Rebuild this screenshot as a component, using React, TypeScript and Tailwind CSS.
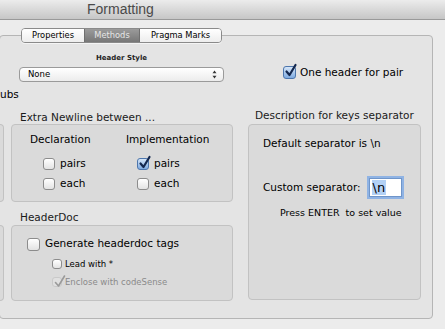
import React from "react";

const FONT = "font-['DejaVu_Sans',Arial,sans-serif]";

function Check({
  checked = false,
  disabled = false,
  size = "w-[12px] h-[12px]",
}: {
  checked?: boolean;
  disabled?: boolean;
  size?: string;
}) {
  let box =
    "border-[#8c8c8c] bg-gradient-to-b from-white to-[#e3e3e3] shadow-[inset_0_1px_0_#fff]";
  if (checked && !disabled)
    box = "border-[#4d76ad] bg-gradient-to-b from-[#d6e6f8] to-[#7eaae0]";
  if (disabled) box = "border-[#c9c9c9] bg-[#e0e0e0]";
  return (
    <span className={`relative inline-block shrink-0 rounded-[3px] border ${box} ${size}`}>
      {checked && (
        <svg
          className="absolute left-[1px] top-[-3px] overflow-visible"
          width="12"
          height="13"
          viewBox="0 0 12 13"
        >
          <path
            d="M1.5 7.5 L4.5 11 L10.5 1"
            fill="none"
            stroke={disabled ? "#9a9a9a" : "#14284f"}
            strokeWidth={disabled ? 1.6 : 2.2}
            strokeLinecap="round"
            strokeLinejoin="round"
          />
        </svg>
      )}
    </span>
  );
}

export default function App() {
  return (
    <div className={`w-[445px] h-[329px] overflow-hidden bg-[#ececec] text-black ${FONT}`}>
      {/* title bar */}
      <div className="h-[20px] border-b border-[#999] bg-gradient-to-b from-[#ececec] to-[#c6c6c6] pl-[87px] font-['Liberation_Sans',Arial,sans-serif] text-[14px] leading-[19px] text-[#4a4a4a]">
        Formatting
      </div>

      <div className="pt-[8px]">
        {/* tabs */}
        <div className="relative z-10 ml-[21px] flex h-[15px] w-[201px] overflow-hidden rounded-[4px] border border-[#8a8a8a] text-[8.3px] leading-[13px] shadow-[0_1px_0_rgba(255,255,255,0.6)]">
          <div className="w-[62px] bg-gradient-to-b from-white to-[#ededed] text-center">Properties</div>
          <div className="w-[56px] border-x border-[#6f6f6f] bg-gradient-to-b from-[#9b9b9b] to-[#777] text-center text-[#e6e6e6]">
            Methods
          </div>
          <div className="flex-1 bg-gradient-to-b from-white to-[#ededed] text-center">Pragma Marks</div>
        </div>

        {/* tab view */}
        <div className="-ml-px -mt-[8px] h-[284px] w-[434px] rounded-[4px] border border-[#b5b5b5] bg-[#e4e4e4]">
          {/* header style row */}
          <div className="flex items-end pt-[17px]">
            <div className="ml-[19px] flex w-[205px] flex-col">
              <div className="h-[10px] text-center text-[7px] font-bold leading-[10px] text-[#262626]">Header Style</div>
              <div className="mt-[4px] flex h-[15px] items-center justify-between rounded-[4px] border border-[#9a9a9a] bg-gradient-to-b from-white to-[#ececec] pl-[8px] pr-[6px] text-[8.5px]">
                <span>None</span>
                <svg width="5" height="9" viewBox="0 0 5 9">
                  <path d="M2.5 0.5 L4.5 3.2 L0.5 3.2 Z" fill="#333" />
                  <path d="M2.5 8.5 L4.5 5.8 L0.5 5.8 Z" fill="#333" />
                </svg>
              </div>
            </div>
            <div className="mb-[3px] ml-[59px] flex h-[13px] items-center gap-[4px] text-[10.5px]">
              <Check checked size="w-[13px] h-[13px]" />
              <span>One header for pair</span>
            </div>
          </div>

          <div className="mt-[5px] text-[10.5px] leading-[14px]">ubs</div>

          {/* columns */}
          <div className="flex">
            <div className="flex w-[233px] flex-col">
              <div className="h-[23px] pl-[20px] pt-[10px] text-[10.5px] leading-[13px] text-[#1a1a1a]">
                Extra Newline between ...
              </div>
              <div className="flex h-[78px]">
                <div className="w-[4px] rounded-r-[4px] border border-l-0 border-[#c2c2c2] bg-[#dadada]" />
                <div className="ml-[7px] flex w-[222px] rounded-[4px] border border-[#c2c2c2] bg-[#dadada] pl-[18px] pt-[7px] text-[10.5px]">
                  <div className="flex w-[96px] flex-col">
                    <div className="leading-[14px]">Declaration</div>
                    <div className="mt-[11px] flex h-[14px] items-center gap-[5px] pl-[13px]">
                      <Check />
                      <span>pairs</span>
                    </div>
                    <div className="mt-[6px] flex h-[14px] items-center gap-[5px] pl-[13px]">
                      <Check />
                      <span>each</span>
                    </div>
                  </div>
                  <div className="flex flex-col">
                    <div className="leading-[14px]">Implementation</div>
                    <div className="mt-[11px] flex h-[14px] items-center gap-[5px] pl-[11px]">
                      <Check checked />
                      <span>pairs</span>
                    </div>
                    <div className="mt-[6px] flex h-[14px] items-center gap-[5px] pl-[11px]">
                      <Check />
                      <span>each</span>
                    </div>
                  </div>
                </div>
              </div>

              <div className="h-[23px] pl-[20px] pt-[9px] text-[10.5px] leading-[13px] text-[#1a1a1a]">HeaderDoc</div>
              <div className="flex h-[76px]">
                <div className="w-[4px] rounded-r-[4px] border border-l-0 border-[#c2c2c2] bg-[#dadada]" />
                <div className="ml-[7px] flex w-[222px] flex-col rounded-[4px] border border-[#c2c2c2] bg-[#dadada] pt-[11px]">
                  <div className="flex h-[14px] items-center gap-[5px] pl-[15px] text-[10.5px]">
                    <Check size="w-[13px] h-[13px]" />
                    <span>Generate headerdoc tags</span>
                  </div>
                  <div className="mt-[7px] flex h-[12px] items-center gap-[3px] pl-[40px] text-[8.5px]">
                    <Check size="w-[10px] h-[10px]" />
                    <span>Lead with *</span>
                  </div>
                  <div className="mt-[6px] flex h-[12px] items-center gap-[3px] pl-[40px] text-[8.5px] text-[#8a8a8a]">
                    <Check checked disabled size="w-[10px] h-[10px]" />
                    <span>Enclose with codeSense</span>
                  </div>
                </div>
              </div>
            </div>

            <div className="ml-[15px] flex w-[173px] flex-col">
              <div className="h-[23px] pl-[7px] pt-[8px] text-[10.5px] leading-[13px] text-[#1a1a1a]">
                Description for keys separator
              </div>
              <div className="flex h-[176px] flex-col rounded-[4px] border border-[#c2c2c2] bg-[#dadada] pl-[14px] pt-[11px] text-[10.5px]">
                <div className="leading-[14px]">Default separator is \n</div>
                <div className="mt-[26px] flex h-[23px] items-center">
                  <span className="whitespace-nowrap">Custom separator:</span>
                  <div className="ml-[8px] flex h-[19px] w-[33px] shrink-0 items-center border border-[#6f95c9] bg-white pl-[2px] shadow-[0_0_0_2px_#8fb3e4]">
                    <span className="bg-[#b3d1f5] px-[1px] text-[13px] leading-[15px]">\n</span>
                  </div>
                </div>
                <div className="mt-[7px] whitespace-pre pl-[17px] text-[9.5px] leading-[13px]">Press ENTER  to set value</div>
              </div>
            </div>
          </div>
        </div>
      </div>
    </div>
  );
}
